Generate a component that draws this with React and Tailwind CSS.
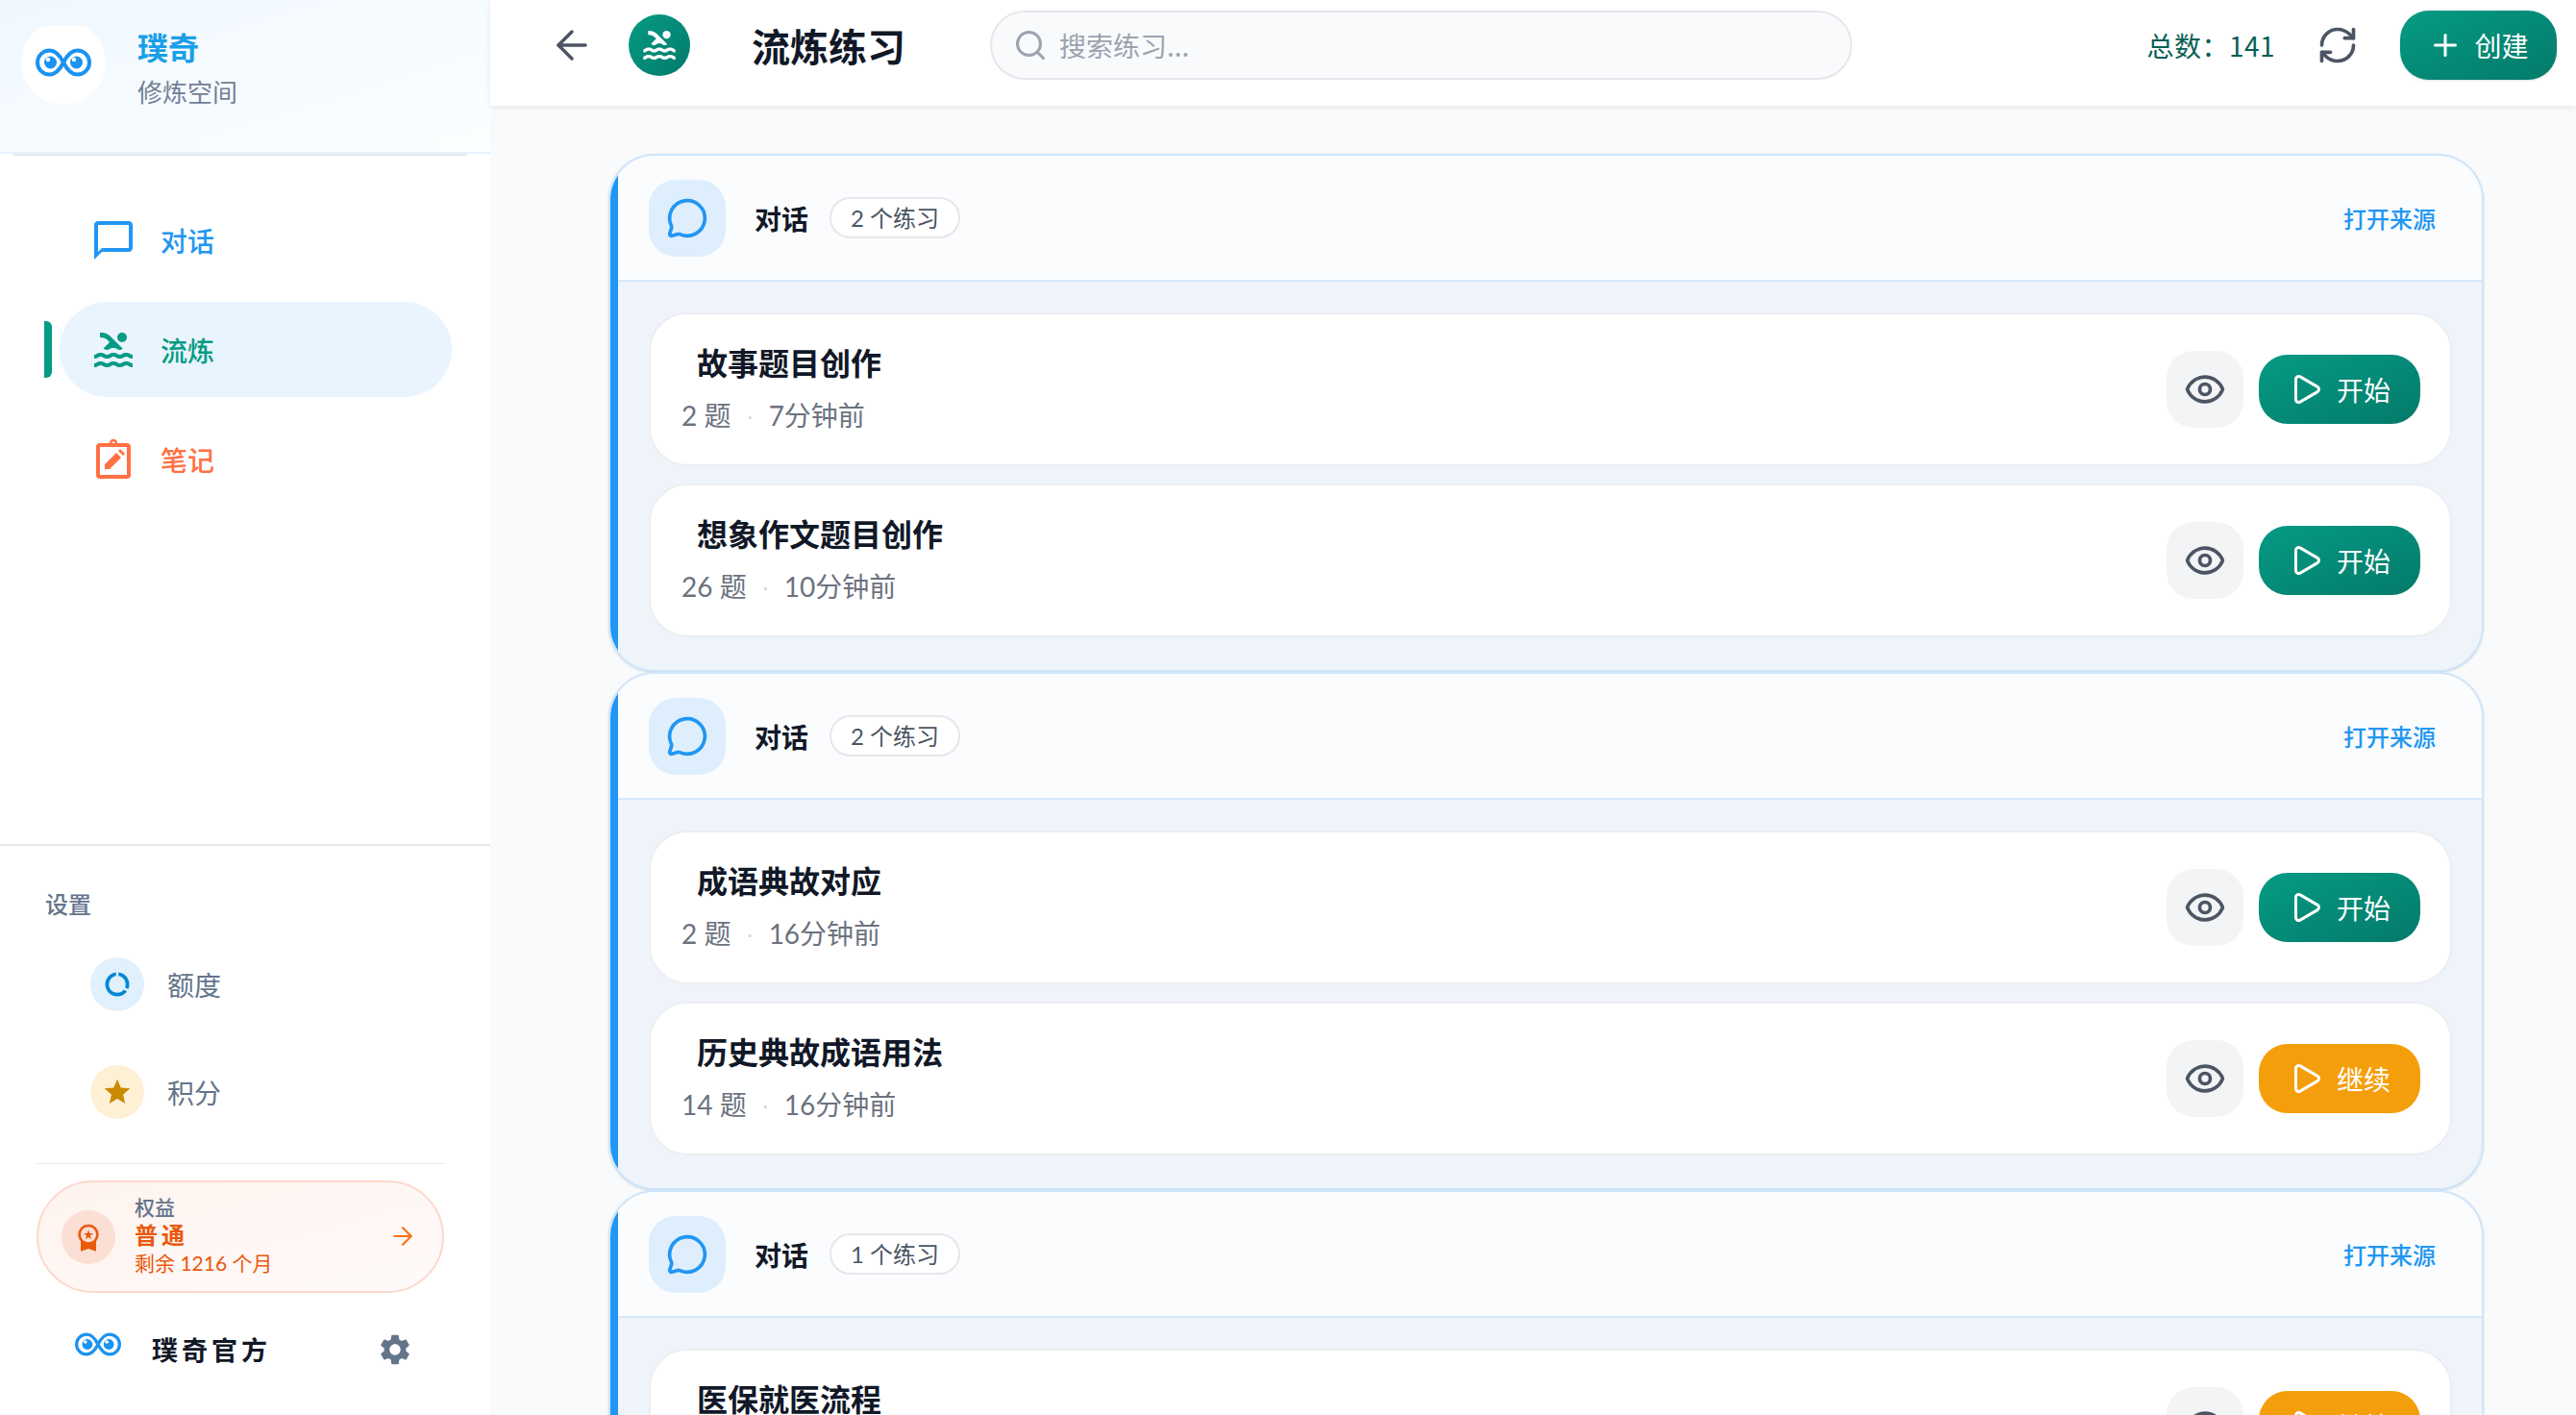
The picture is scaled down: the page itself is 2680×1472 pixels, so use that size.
import React from "react";
import { ArrowLeft, Eye, MessageCircle, Play, Plus, RefreshCw, Search, ArrowRight } from "lucide-react";
import { MdChatBubbleOutline, MdPool, MdSettings, MdDataUsage, MdStar, MdWorkspacePremium } from "react-icons/md";

const Logo = ({ className }) => (
  <svg viewBox="0 0 58 30" className={className} fill="none">
    <path
      d="M29 15C25 7 20 2.5 14.5 2.5a12.5 12.5 0 0 0 0 25C20 27.5 25 23 29 15C33 7 38 2.5 43.5 2.5a12.5 12.5 0 0 1 0 25C38 27.5 33 23 29 15Z"
      stroke="#1b93f1"
      strokeWidth="4"
    />
    <circle cx="15.5" cy="15" r="6.5" fill="#1b93f1" />
    <circle cx="42.5" cy="15" r="6.5" fill="#1b93f1" />
    <circle cx="13" cy="12" r="2.2" fill="#fff" />
    <circle cx="40" cy="12" r="2.2" fill="#fff" />
  </svg>
);

const NoteIcon = () => (
  <svg viewBox="0 0 40 44" className="w-[40px] h-[44px]" fill="none">
    <rect x="4" y="7" width="32" height="33" rx="2" stroke="#ff7043" strokeWidth="4" />
    <circle cx="20" cy="5" r="3" stroke="#ff7043" strokeWidth="2.5" />
    <path d="M11 32v-5l12-12 5 5-12 12zM25 13l2-2 5 5-2 2z" fill="#ff7043" />
  </svg>
);

const nav = [
  { label: "对话", color: "text-[#2196f3]", icon: <MdChatBubbleOutline size={48} /> },
  { label: "流炼", color: "text-[#059b84]", icon: <MdPool size={48} />, active: true },
  { label: "笔记", color: "text-[#ff7043]", icon: <NoteIcon /> },
];

const sections = [
  {
    count: "2 个练习",
    items: [
      { title: "故事题目创作", num: "2 题", time: "7分钟前", action: "开始" },
      { title: "想象作文题目创作", num: "26 题", time: "10分钟前", action: "开始" },
    ],
  },
  {
    count: "2 个练习",
    items: [
      { title: "成语典故对应", num: "2 题", time: "16分钟前", action: "开始" },
      { title: "历史典故成语用法", num: "14 题", time: "16分钟前", action: "继续" },
    ],
  },
  {
    count: "1 个练习",
    items: [{ title: "医保就医流程", num: "3 题", time: "20分钟前", action: "继续" }],
  },
];

const Card = ({ item }) => (
  <div className="h-[160px] shrink-0 flex items-center justify-between bg-white border-2 border-[#eceef2] rounded-[40px] pl-[32px] pr-[31px]">
    <div className="flex flex-col pb-[5px]">
      <p className="pl-[16px] text-[32px] leading-[44px] font-semibold text-[#111827]">{item.title}</p>
      <p className="mt-[15px] flex items-center text-[28px] leading-[38px] text-[#6b7280] font-['Lato','Noto_Sans_CJK_SC',sans-serif]">
        <span>{item.num}</span>
        <span className="mx-[17px] text-[#d1d5db] text-[20px]">·</span>
        <span>{item.time}</span>
      </p>
    </div>
    <div className="flex items-center gap-[16px]">
      <button className="w-[80px] h-[80px] rounded-[28px] bg-[#f3f4f6] flex items-center justify-center text-[#4b5563]">
        <Eye size={44} />
      </button>
      <button
        className={
          item.action === "开始"
            ? "w-[168px] h-[72px] rounded-[30px] flex items-center justify-center gap-[14px] text-white text-[28px] bg-gradient-to-br from-[#059b84] to-[#047a6a]"
            : "w-[168px] h-[72px] rounded-[30px] flex items-center justify-center gap-[14px] text-white text-[28px] bg-[#f59e0b]"
        }
      >
        <Play size={36} />
        {item.action}
      </button>
    </div>
  </div>
);

const Section = ({ section }) => (
  <section className="h-[539px] shrink-0 flex border-2 border-[#cfe5fa] rounded-[48px] overflow-hidden bg-[#eff4fb] shadow-sm">
    <div className="w-[8px] shrink-0 bg-[#2196f3]" />
    <div className="flex-1 min-w-0">
      <div className="h-[131px] flex items-center justify-between bg-[#fafcfe] border-b-2 border-[#d6eafc] pl-[32px] pr-[48px]">
        <div className="flex items-center">
          <div className="w-[80px] h-[80px] rounded-[28px] bg-[#deeefc] flex items-center justify-center text-[#2196f3]">
            <MessageCircle size={44} />
          </div>
          <span className="ml-[30px] text-[28px] font-semibold text-[#111827]">对话</span>
          <span className="ml-[22px] h-[43px] px-[20px] flex items-center rounded-full bg-white border-2 border-[#e5e7eb] text-[24px] text-[#4b5563] font-['Lato','Noto_Sans_CJK_SC',sans-serif]">
            {section.count}
          </span>
        </div>
        <a className="text-[24px] font-medium text-[#2196f3]">打开来源</a>
      </div>
      <div className="flex flex-col gap-[18px] pt-[32px] pl-[32px] pr-[31px]">
        {section.items.map((item) => (
          <Card key={item.title} item={item} />
        ))}
      </div>
    </div>
  </section>
);

const App = () => {
  return (
    <div className="h-screen w-full flex overflow-hidden bg-[#f8fafc] font-['Noto_Sans_CJK_SC','Noto_Sans',sans-serif]">
      {/* sidebar */}
      <aside className="w-[510px] shrink-0 h-full flex flex-col bg-white">
        <div className="h-[160px] shrink-0 border-b-2 border-[#e6f2fc] bg-gradient-to-br from-[#f0f8fe] to-[#fcfeff] pl-[22px] pt-[27px] flex">
          <div className="w-[88px] h-[82px] overflow-hidden">
            <div className="w-[88px] h-[88px] -mt-[6px] rounded-full bg-white flex items-center justify-center">
              <Logo className="w-[58px] h-[30px]" />
            </div>
          </div>
          <div className="ml-[33px] flex flex-col">
            <p className="text-[32px] leading-[42px] font-bold text-[#1a9fe8]">璞奇</p>
            <p className="mt-[8px] text-[26px] leading-[36px] text-[#718096]">修炼空间</p>
          </div>
        </div>
        <div className="h-[2px] mx-[14px] mr-[24px] bg-[#e2e8f0]" />

        <nav className="pt-[38px] flex flex-col gap-[15px] pl-[62px] w-[470px]">
          {nav.map((n) => (
            <div
              key={n.label}
              className={`relative h-[99px] rounded-full flex items-center pl-[32px] gap-[25px] ${n.color} ${n.active ? "bg-[#e9f4fe]" : ""}`}
            >
              {n.active && <span className="absolute -left-[16px] top-[20px] w-[8px] h-[59px] rounded-r-[6px] bg-[#059b84]" />}
              <span className="w-[48px] flex justify-center">{n.icon}</span>
              <span className="text-[28px] font-medium">{n.label}</span>
            </div>
          ))}
        </nav>

        <div className="flex-1" />

        <div className="h-[2px] bg-[#e5e7eb]" />
        <div className="h-[592px] shrink-0 flex flex-col">
          <p className="pl-[47px] mt-[43px] text-[24px] leading-[34px] font-medium text-[#64748b]">设置</p>
          <div className="mt-[39px] flex flex-col gap-[56px] pl-[94px]">
            <div className="flex items-center gap-[24px] text-[28px] text-[#64748b]">
              <span className="w-[56px] h-[56px] rounded-full bg-[#e0f0fc] flex items-center justify-center text-[#0288d1]">
                <MdDataUsage size={30} />
              </span>
              额度
            </div>
            <div className="flex items-center gap-[24px] text-[28px] text-[#64748b]">
              <span className="w-[56px] h-[56px] rounded-full bg-[#fef0d5] flex items-center justify-center text-[#ca8a04]">
                <MdStar size={32} />
              </span>
              积分
            </div>
          </div>
          <div className="mt-[46px] ml-[38px] mr-[48px] h-[1px] bg-[#e5e7eb] shrink-0" />
          <div className="mt-[17px] ml-[38px] mr-[48px] h-[117px] shrink-0 rounded-full border-2 border-[#fbd9cc] bg-gradient-to-br from-[#fef3ee] to-[#fffafa] flex items-center pl-[24px] pr-[26px]">
            <span className="w-[56px] h-[56px] rounded-full bg-[#fcdfd4] flex items-center justify-center text-[#ea580c]">
              <MdWorkspacePremium size={32} />
            </span>
            <div className="ml-[20px] flex-1 flex flex-col pb-[4px]">
              <span className="text-[21px] leading-[26px] font-medium text-[#64748b]">权益</span>
              <span className="text-[24px] leading-[32px] font-bold tracking-[4px] text-[#ea580c]">普通</span>
              <span className="text-[21px] leading-[28px] text-[#ea580c] font-['Lato','Noto_Sans_CJK_SC',sans-serif]">剩余 1216 个月</span>
            </div>
            <ArrowRight size={30} strokeWidth={1.75} className="text-[#f97316] -mt-[2px]" />
          </div>
          <div className="flex items-center pl-[78px] pr-[80px] mt-[39px]">
            <Logo className="w-[48px] h-[25px] -mt-[12px]" />
            <span className="ml-[32px] flex-1 text-[27px] font-semibold tracking-[4px] text-[#111827]">璞奇官方</span>
            <MdSettings size={38} className="text-[#64748b]" />
          </div>
        </div>
      </aside>

      {/* main */}
      <div className="flex-1 min-w-0 flex flex-col h-full">
        <header className="relative z-10 h-[110px] shrink-0 bg-white shadow-[0_2px_6px_rgba(0,0,0,0.08)] flex items-center pl-[61px] pr-[20px] pb-[16px]">
          <ArrowLeft size={48} strokeWidth={1.75} className="text-[#4b5563] -mr-[2px]" />
          <span className="ml-[37px] w-[64px] h-[64px] rounded-full bg-gradient-to-br from-[#059b84] to-[#047a6a] flex items-center justify-center text-white">
            <MdPool size={40} />
          </span>
          <h1 className="ml-[64px] text-[40px] font-semibold text-[#111827]">流炼练习</h1>
          <div className="ml-[88px] w-[897px] h-[72px] rounded-full bg-[#f8fafc] border-2 border-[#e5e7eb] flex items-center pl-[22px] gap-[12px]">
            <Search size={36} className="text-[#9ca3af]" />
            <span className="text-[28px] text-[#9ca3af]">搜索练习...</span>
          </div>
          <div className="flex-1" />
          <span className="text-[28px] tracking-[0.5px] text-[#065f55]">总数：141</span>
          <RefreshCw size={44} strokeWidth={2} className="ml-[43px] text-[#4b5563]" />
          <button className="ml-[43px] w-[163px] h-[72px] rounded-[30px] bg-gradient-to-br from-[#059b84] to-[#047a6a] shadow-sm flex items-center justify-center gap-[12px] text-white text-[28px]">
            <Plus size={36} />
            创建
          </button>
        </header>

        <main className="flex-1 min-h-0 overflow-hidden pl-[123px] pr-[96px] pt-[50px] flex flex-col">
          {sections.map((s, i) => (
            <Section key={i} section={s} />
          ))}
        </main>
      </div>
    </div>
  );
};

export default App;
